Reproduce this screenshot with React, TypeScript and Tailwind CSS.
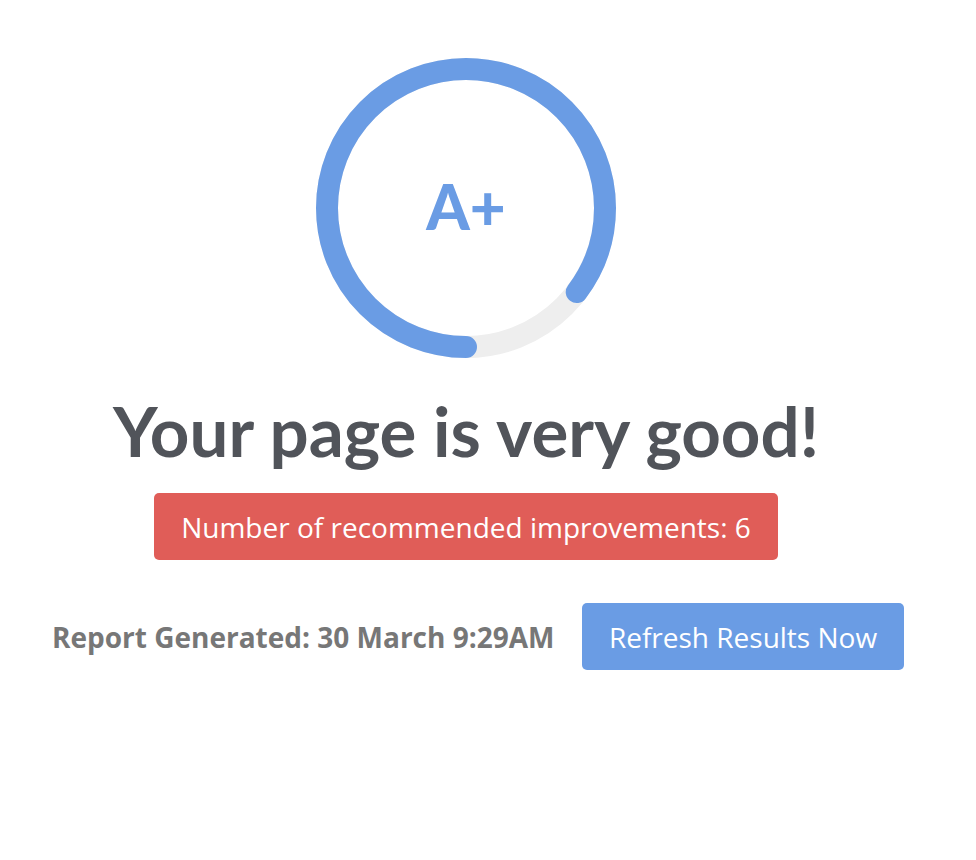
import React from "react";

const ScoreRing = ({ grade, percent }: { grade: string; percent: number }) => {
  const r = 139;
  const circ = 2 * Math.PI * r;
  const arc = circ * percent;

  return (
    <div className="relative w-[300px] h-[300px]">
      <svg width="300" height="300" viewBox="0 0 300 300" className="rotate-90">
        <circle cx="150" cy="150" r={r} fill="none" stroke="#eeeeee" strokeWidth="22" />
        <circle
          cx="150"
          cy="150"
          r={r}
          fill="none"
          stroke="#6a9ce4"
          strokeWidth="22"
          strokeLinecap="round"
          strokeDasharray={`${arc} ${circ}`}
        />
      </svg>
      <div className="absolute inset-0 flex items-center justify-center pb-[4px]">
        <span className="text-[62px] font-black text-[#6a9ce4] leading-none">{grade}</span>
      </div>
    </div>
  );
};

export default function App() {
  return (
    <div className="min-h-screen bg-white font-['Lato','Liberation_Sans',sans-serif]">
      <div className="w-[932px] flex flex-col items-center pt-[58px]">
        <ScoreRing grade="A+" percent={0.853} />

        <h1 className="mt-[38px] text-[69px] font-bold leading-none text-[#51545a]">
          Your page is very good!
        </h1>

        <div className="mt-[28px] w-[624px] h-[67px] rounded-[5px] bg-[#e05d58] flex items-center justify-center font-['Open_Sans',sans-serif]">
          <span className="text-[28px] text-white">Number of recommended improvements: 6</span>
        </div>

        <div className="mt-[43px] self-start ml-[52px] w-[852px] flex items-center justify-between font-['Open_Sans',sans-serif]">
          <span className="text-[28px] font-bold text-[#777777]">Report Generated: 30 March 9:29AM</span>
          <button className="w-[322px] h-[67px] rounded-[5px] bg-[#6a9ce4] text-white text-[28px]">
            Refresh Results Now
          </button>
        </div>
      </div>
    </div>
  );
}
